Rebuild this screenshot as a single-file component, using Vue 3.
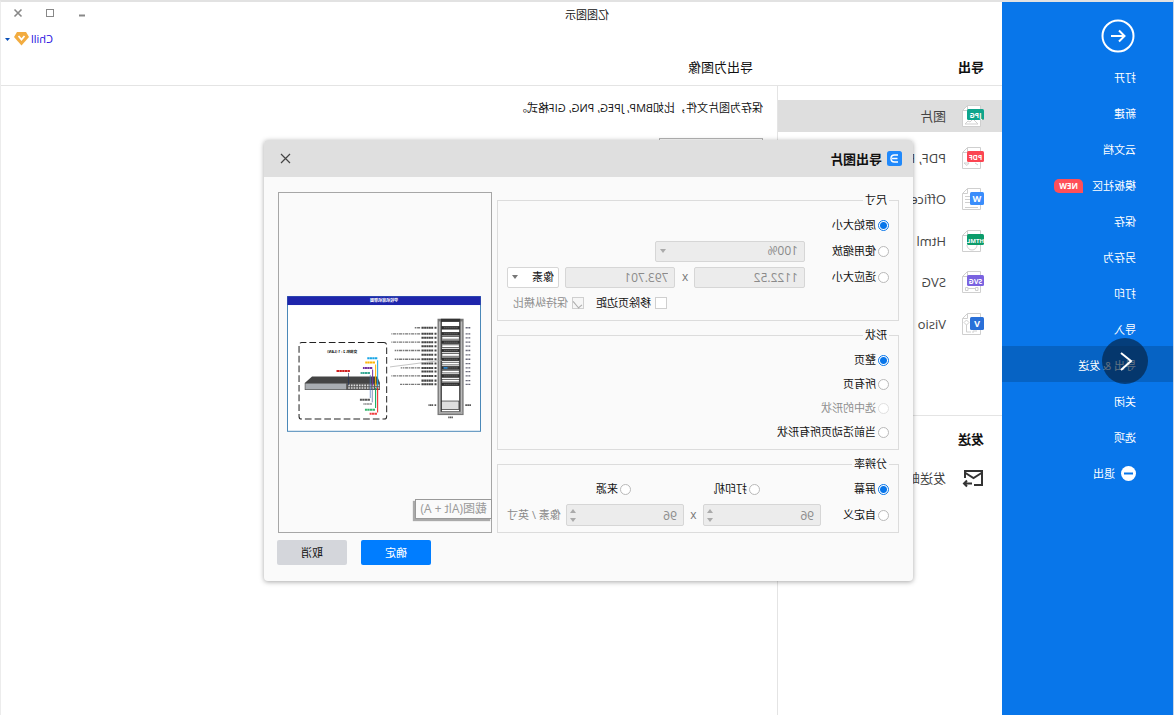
<script setup>
import { ref } from 'vue'

const menu = [
  { label: '打开' },
  { label: '新建' },
  { label: '云文档' },
  { label: '模板社区', badge: 'NEW' },
  { label: '保存' },
  { label: '另存为' },
  { label: '打印' },
  { label: '导入' },
  { label: '导出 & 发送', active: true },
  { label: '关闭' },
  { label: '选项' },
  { label: '退出', exit: true },
]

const formats = [
  { label: '图片', tag: 'JPG', color: '#0ea58c', active: true, art: 'M7 20L12 15L15 18L17 17L20 20Z' },
  { label: 'PDF, PS', tag: 'PDF', color: '#fb4552', art: 'M7 19L10 17M16 17H21L18 19.5Z' },
  { label: 'Office', tag: 'W', color: '#3a8dfb', square: true, art: 'M15 9.5H20M15 12.5H20M15 15.5H20M7 20.5H20' },
  { label: 'Html', tag: 'HTML', color: '#0c9c6b', art: 'M8 16A5 5 0 0 0 18 16' },
  { label: 'SVG', tag: 'SVG', color: '#7a63e0', art: 'M7 17.5H9.5V20.5H7ZM17 17.5H19.5V20.5H17ZM9.5 18.5H17' },
  { label: 'Visio', tag: 'V', color: '#2a70d8', square: true, art: 'M18.5 8L21 10.5L18.5 13L16 10.5ZM18.5 13V20H14M8 19H12V21' },
]

const size = ref('original')
const shape = ref('page')
const resolution = ref('screen')
const scale = ref('100%')
const width = ref('1122.52')
const height = ref('793.701')
const unit = ref('px')
const removeMargin = ref(false)
const keepRatio = ref(true)
const dpiX = ref(96)
const dpiY = ref(96)

const shapes = [
  { value: 'page', label: '整页' },
  { value: 'all', label: '所有页' },
  { value: 'selected', label: '选中的形状', disabled: true },
  { value: 'active', label: '当前活动页所有形状' },
]

// Rack units in the page thumbnail: vertical position and caption length.
const units = [
  { y: 95, w: 62, dark: true },
  { y: 113, w: 132, dark: true },
  { y: 125, w: 36 },
  { y: 138, w: 132, dark: true },
  { y: 150, w: 36 },
  { y: 163, w: 122, dark: true },
  { y: 176, w: 36 },
  { y: 189, w: 122, dark: true },
  { y: 202, w: 36 },
  { y: 215, w: 104, dark: true },
  { y: 226, w: 36 },
  { y: 239, w: 132, dark: true },
  { y: 253, w: 36 },
  { y: 264, w: 106, dark: true },
]
</script>

<template>
  <div class="app">
    <nav class="sidebar">
      <button class="back" aria-label="返回">
        <svg viewBox="0 0 34 34" width="34" height="34" fill="none" stroke="#fff" stroke-width="2">
          <circle cx="17" cy="17" r="15.5" />
          <path d="M24 17H11M16 11.5L10.5 17L16 22.5" />
        </svg>
      </button>
      <a v-for="m in menu" :key="m.label" href="#" class="menu-item" :class="{ active: m.active }">
        <svg v-if="m.exit" viewBox="0 0 15 15" width="15" height="15">
          <circle cx="7.5" cy="7.5" r="7.5" fill="#fff" />
          <rect x="3" y="6.5" width="9" height="2" fill="#0876ea" />
        </svg>
        <span>{{ m.label }}</span>
        <span v-if="m.badge" class="badge">{{ m.badge }}</span>
      </a>
      <button class="prev" aria-label="上一张">
        <svg viewBox="0 0 46 46" width="46" height="46" fill="none" stroke="#fff" stroke-width="2">
          <path d="M27 15L17 23L27 32" />
        </svg>
      </button>
    </nav>

    <header class="titlebar">
      <span class="app-title">亿图图示</span>
      <div class="controls">
        <button aria-label="最小化">
          <svg viewBox="0 0 10 10" width="10" height="10"><path d="M2 7.5H8" stroke="#888" stroke-width="2" /></svg>
        </button>
        <button aria-label="最大化">
          <svg viewBox="0 0 10 10" width="10" height="10"><rect x="1.5" y="1.5" width="7" height="7" fill="none" stroke="#888" /></svg>
        </button>
        <button aria-label="关闭窗口">
          <svg viewBox="0 0 10 10" width="10" height="10"><path d="M1.5 1.5L8.5 8.5M8.5 1.5L1.5 8.5" stroke="#888" stroke-width="1.6" /></svg>
        </button>
      </div>
    </header>

    <div class="heading">
      <h2 class="section-title">导出</h2>
      <h1 class="page-title">导出为图像</h1>
      <a href="#" class="user">
        <span>Chill</span>
        <svg viewBox="0 0 15 14" width="15" height="14">
          <path d="M3 0H12L15 5L7.5 13.5L0 5Z" fill="#f2ac40" />
          <path d="M4.5 4L7.5 7.5L10.5 4" fill="none" stroke="#fff" stroke-width="1.8" />
        </svg>
        <svg class="caret" viewBox="0 0 5 3" width="5" height="3"><path d="M0 0H5L2.5 3Z" fill="#0a4fb8" /></svg>
      </a>
    </div>

    <aside class="panel">
      <ul class="formats">
        <li v-for="f in formats" :key="f.tag">
          <a href="#" class="entry" :class="{ active: f.active }">
            <svg viewBox="0 0 24 24" width="24" height="24">
              <path d="M4.5 1.5H17.5L22.5 6.5V22.5H4.5Z" fill="#fff" stroke="#cfcfcf" />
              <path d="M17.5 1.5V6.5H22.5" fill="none" stroke="#cfcfcf" />
              <path :d="f.art" fill="none" stroke="#cfcfcf" />
              <rect x="1" y="5" :width="f.square ? 14 : 17" :height="f.square ? 13 : 11" rx="1.5" :fill="f.color" />
              <text
                :x="f.square ? 8 : 9.5"
                :y="f.square ? 15 : 13.5"
                :class="f.square ? 'tag-big' : f.tag.length > 3 ? 'tag-small' : 'tag'"
              >{{ f.tag }}</text>
            </svg>
            <span>{{ f.label }}</span>
          </a>
        </li>
      </ul>
      <section class="send">
        <h2 class="section-title">发送</h2>
        <a href="#" class="entry">
          <svg viewBox="0 0 24 24" width="24" height="24" fill="none" stroke="#333" stroke-width="2">
            <path d="M11 19H3V5H20V12" />
            <path d="M3.5 7L11.5 12L19.5 7" />
            <path d="M13 17.5H21M18 14.5L21 17.5L18 20.5" />
          </svg>
          <span>发送邮件</span>
        </a>
      </section>
    </aside>

    <main class="content">
      <p>保存为图片文件，比如BMP, JPEG, PNG, GIF格式。</p>
      <div class="thumb"></div>
    </main>

    <div class="overlay">
      <form class="dialog" role="dialog" aria-labelledby="dialog-title" @submit.prevent>
        <header class="dialog-head">
          <svg viewBox="0 0 15 15" width="15" height="15">
            <rect width="15" height="15" rx="2.5" fill="#2089fb" />
            <path d="M4 4H7.5C12.2 4 12.2 11 7.5 11H4M4.5 7.5H10" fill="none" stroke="#fff" stroke-width="1.4" />
          </svg>
          <h3 id="dialog-title">导出图片</h3>
          <button type="button" class="close" aria-label="关闭对话框">
            <svg viewBox="0 0 11 11" width="11" height="11"><path d="M1 1L10 10M10 1L1 10" stroke="#444" stroke-width="1.2" /></svg>
          </button>
        </header>

        <div class="dialog-body">
          <div class="groups">
            <fieldset>
              <legend>尺寸</legend>
              <div class="row">
                <label><input v-model="size" type="radio" name="size" value="original" />原始大小</label>
              </div>
              <div class="row">
                <label class="lead"><input v-model="size" type="radio" name="size" value="scale" />使用缩放</label>
                <span class="select scale">
                  <select v-model="scale" disabled aria-label="缩放比例"><option>100%</option></select>
                  <i class="arrow-down"></i>
                </span>
              </div>
              <div class="row">
                <label class="lead"><input v-model="size" type="radio" name="size" value="fit" />适应大小</label>
                <input v-model="width" class="box" type="text" disabled aria-label="宽度" />
                <span class="times">x</span>
                <input v-model="height" class="box" type="text" disabled aria-label="高度" />
                <span class="select unit">
                  <select v-model="unit" aria-label="单位"><option value="px">像素</option></select>
                  <i class="arrow-down"></i>
                </span>
              </div>
              <div class="row checks">
                <label><input v-model="removeMargin" type="checkbox" />移除页边距</label>
                <label class="off"><input v-model="keepRatio" type="checkbox" disabled />保持纵横比</label>
              </div>
            </fieldset>

            <fieldset class="tight">
              <legend>形状</legend>
              <div v-for="s in shapes" :key="s.value" class="row">
                <label :class="{ off: s.disabled }">
                  <input v-model="shape" type="radio" name="shape" :value="s.value" :disabled="s.disabled" />{{ s.label }}
                </label>
              </div>
            </fieldset>

            <fieldset>
              <legend>分辨率</legend>
              <div class="row thirds">
                <label><input v-model="resolution" type="radio" name="res" value="screen" />屏幕</label>
                <label><input v-model="resolution" type="radio" name="res" value="printer" />打印机</label>
                <label><input v-model="resolution" type="radio" name="res" value="source" />来源</label>
              </div>
              <div class="row">
                <label class="lead-short"><input v-model="resolution" type="radio" name="res" value="custom" />自定义</label>
                <span class="spin">
                  <input v-model="dpiX" class="box" type="number" disabled aria-label="水平分辨率" />
                  <span class="steps"><i class="arrow-up"></i><i class="arrow-down"></i></span>
                </span>
                <span class="times">x</span>
                <span class="spin">
                  <input v-model="dpiY" class="box" type="number" disabled aria-label="垂直分辨率" />
                  <span class="steps"><i class="arrow-up"></i><i class="arrow-down"></i></span>
                </span>
                <span class="suffix">像素 / 英寸</span>
              </div>
            </fieldset>
          </div>

          <div class="preview">
            <svg class="sheet" viewBox="0 0 580 408">
              <rect x="1.5" y="1.5" width="577" height="403" fill="#fff" stroke="#4a88b8" stroke-width="3" />
              <rect x="1" y="1" width="578" height="26" fill="#1e25ab" />
              <text x="290" y="18" class="sheet-title">学校机房机架图</text>

              <g>
                <rect x="52" y="68" width="78" height="288" fill="#777" />
                <rect x="56" y="76" width="4" height="276" fill="#bbb" />
                <rect x="122" y="76" width="4" height="276" fill="#bbb" />
                <rect x="64" y="76" width="54" height="270" fill="#fff" stroke="#222" stroke-width="2" />
                <rect x="62" y="68" width="58" height="8" fill="#333" />
                <rect x="56" y="346" width="70" height="6" fill="#aaa" />
                <rect x="66" y="314" width="52" height="25" fill="#ddd" stroke="#222" stroke-width="2" />
                <g v-for="u in units" :key="u.y">
                  <rect
                    x="65" :y="u.y - 4" width="52" height="8"
                    :fill="u.dark ? '#333' : '#fff'" stroke="#222" stroke-width="2"
                  />
                  <path v-if="u.dark" :d="`M70 ${u.y}H112`" stroke="#888" stroke-width="2" stroke-dasharray="4 2" />
                  <path :d="`M133 ${u.y}h6M143 ${u.y}h${Math.min(u.w, 36)}`" stroke="#444" stroke-width="6" stroke-dasharray="6 1" />
                  <path v-if="u.w > 40" :d="`M182 ${u.y}h${u.w - 46}`" stroke="#777" stroke-width="4" stroke-dasharray="9 2 5 2" />
                  <path :d="`M32 ${u.y}h15`" stroke="#667" stroke-width="4" stroke-dasharray="4 1" />
                </g>
                <rect x="100" y="213" width="12" height="4" fill="#2196f3" />
                <path d="M134 326h5M143 326h14M30 326h17" stroke="#555" stroke-width="5" stroke-dasharray="5 1" />
                <path d="M84 363h14" stroke="#555" stroke-width="5" stroke-dasharray="4 1" />
                <path d="M116 192L272 212" stroke="#aaa" stroke-width="2" />
              </g>

              <g>
                <rect x="282" y="139" width="262" height="229" rx="8" fill="none" stroke="#222" stroke-width="3" stroke-dasharray="20 9" />
                <text x="415" y="170" class="sheet-sub">交换机 2 : 1 (LAN)</text>
                <path d="M310 241H505L527 260H302Z" fill="#444" />
                <rect x="302" y="260" width="225" height="21" fill="#555" />
                <rect x="403" y="262" width="122" height="17" fill="#a9adb2" />
                <path d="M304 267H400M304 275H400" stroke="#ddd" stroke-width="5" stroke-dasharray="5 3" />
                <path d="M309 192V268" stroke="#18a5e5" stroke-width="3" />
                <path d="M315 205V268" stroke="#fbb400" stroke-width="3" />
                <path d="M324 220V268" stroke="#7030a0" stroke-width="3" />
                <path d="M331 236V305" stroke="#4472c4" stroke-width="2" />
                <path d="M325 275V318" stroke="#4a5f90" stroke-width="2" />
                <path d="M396 230V267" stroke="#23355c" stroke-width="2" />
                <path d="M315 275V335" stroke="#00a550" stroke-width="3" />
                <path d="M309 275V348" stroke="#f02020" stroke-width="3" />
                <g stroke-width="6" stroke-dasharray="7 1">
                  <path d="M310 186h30" stroke="#18a5e5" />
                  <path d="M317 199h29" stroke="#fbb400" />
                  <path d="M325 215h28" stroke="#7030a0" />
                  <path d="M332 230h28" stroke="#36a893" />
                  <path d="M392 224h41" stroke="#d02020" />
                  <path d="M332 310h30" stroke="#555" />
                  <path d="M326 323h26" stroke="#aaa" />
                  <path d="M317 340h30" stroke="#36b56c" />
                  <path d="M311 352h22" stroke="#f04040" />
                </g>
              </g>
            </svg>
            <span class="tooltip" role="tooltip">截图(Alt + A)</span>
          </div>
        </div>

        <footer class="dialog-foot">
          <button type="submit" class="primary">确定</button>
          <button type="button">取消</button>
        </footer>
      </form>
    </div>
  </div>
</template>

<style>
body {
  background: #fff;
}
</style>

<style scoped>
* {
  box-sizing: border-box;
}

/* The whole window is shown flipped left to right. */
.app {
  position: relative;
  display: grid;
  grid-template-columns: 171px 225px 1fr;
  grid-template-rows: 26px 58px 1fr;
  min-height: 100vh;
  border-top: 2px solid #e2e2e2;
  border-left: 1px solid #c9d6e6;
  border-right: 1px solid #ececec;
  overflow: hidden;
  transform: scaleX(-1);
  background: #fff;
  color: #111;
  font-family: "Open Sans", "Noto Sans CJK SC", sans-serif;
  font-size: 11px;
  line-height: 16px;
}

a {
  color: inherit;
  text-decoration: none;
}

button {
  padding: 0;
  border: 0;
  background: none;
  font: inherit;
}

svg {
  display: block;
  flex: none;
}

.sidebar {
  position: relative;
  grid-column: 1;
  grid-row: 1 / -1;
  background: #0876ea;
  color: #fff;
}

.back {
  display: block;
  margin: 17px 0 5px 38px;
}

.menu-item {
  display: flex;
  align-items: center;
  gap: 6px;
  height: 36px;
  padding: 3px 0 0 37px;
}

.menu-item.active {
  background: #0663c4;
}

.badge {
  margin-left: 3px;
  padding: 0 5px;
  border-radius: 5px 5px 5px 0;
  background: #ff4f58;
  font-size: 8px;
  font-weight: 700;
  line-height: 14px;
}

.prev {
  position: absolute;
  top: 336px;
  left: 25px;
  border-radius: 50%;
  background: rgba(4, 32, 60, 0.64);
}

.titlebar {
  grid-column: 1 / -1;
  grid-row: 1;
  display: grid;
  grid-template-columns: 1fr auto 1fr;
  align-items: center;
  z-index: 1;
}

.app-title {
  grid-column: 2;
}

.controls {
  display: flex;
  justify-content: flex-end;
  gap: 22px;
  padding: 0 12px 4px 0;
}

.heading {
  grid-column: 2 / -1;
  grid-row: 2;
  display: grid;
  grid-template-columns: 225px 1fr auto;
  border-bottom: 1px solid #e4e4e4;
}

.section-title,
.page-title {
  margin: 0;
  font-size: 13px;
  line-height: 20px;
}

.heading .section-title {
  padding: 29px 0 0 18px;
}

.page-title {
  padding: 29px 0 0 24px;
  font-weight: 400;
}

.user {
  display: flex;
  align-items: center;
  align-self: start;
  gap: 2px;
  padding: 3px 4px 0 0;
  color: #1c0ce0;
}

.caret {
  margin-left: 2px;
}

.panel {
  grid-column: 2;
  grid-row: 3;
  border-right: 1px solid #e4e4e4;
}

.formats {
  display: flex;
  flex-direction: column;
  justify-content: space-between;
  height: 240px;
  margin: 14px 0 0;
  padding: 0;
  list-style: none;
}

.entry {
  display: flex;
  align-items: center;
  gap: 15px;
  height: 32px;
  padding-left: 17px;
  color: #444;
  font-size: 13px;
  white-space: nowrap;
}

.entry.active {
  background: #dedede;
}

.tag,
.tag-small,
.tag-big {
  fill: #fff;
  font-size: 7px;
  font-weight: 700;
  text-anchor: middle;
}

.tag-small {
  font-size: 6px;
}

.tag-big {
  font-size: 9px;
}

.send {
  margin-top: 75px;
  border-top: 1px solid #e4e4e4;
}

.send .section-title {
  padding: 13px 0 13px 18px;
}

.content {
  grid-column: 3;
  grid-row: 3;
  padding: 14px 14px 0;
}

.content p {
  margin: 0;
}

.thumb {
  width: 104px;
  height: 80px;
  margin-top: 22px;
  border: 1px solid #b4b4b4;
}

.overlay {
  position: absolute;
  inset: 0;
  display: flex;
  justify-content: center;
  align-items: flex-start;
  padding: 138px 3px 0 0;
  z-index: 2;
}

.dialog {
  width: 649px;
  max-width: 100%;
  border-radius: 4px;
  background: #fafafa;
  box-shadow: 0 1px 5px rgba(0, 0, 0, 0.35);
}

.dialog-head {
  display: flex;
  align-items: center;
  gap: 5px;
  height: 37px;
  padding: 0 16px 0 11px;
  border-radius: 4px 4px 0 0;
  background: #dfdfdf;
}

.dialog-head h3 {
  margin: 0;
  font-size: 13px;
}

.close {
  margin-left: auto;
}

.dialog-body {
  display: grid;
  grid-template-columns: 1fr 214px;
  gap: 5px;
  padding: 15px 14px 0;
}

.groups {
  display: flex;
  flex-direction: column;
  gap: 6px;
}

fieldset {
  display: flex;
  flex-direction: column;
  gap: 4px;
  min-width: 0;
  margin: 0;
  padding: 6px 9px;
  border: 1px solid #dcdcdc;
}

fieldset.tight {
  gap: 2px;
}

legend {
  padding: 0 2px;
}

.row {
  display: flex;
  align-items: center;
  height: 22px;
}

label {
  display: flex;
  align-items: center;
  gap: 2px;
  white-space: nowrap;
}

.lead {
  width: 84px;
}

.lead-short {
  width: 68px;
}

.off {
  color: #8f8f8f;
}

input[type="radio"] {
  appearance: none;
  width: 11px;
  height: 11px;
  margin: 0;
  border: 1px solid #b9b9b9;
  border-radius: 50%;
  background: #fff;
}

input[type="radio"]:checked {
  border-color: #0876ea;
  background: radial-gradient(circle, #0876ea 3px, #fff 4px);
}

input[type="radio"]:disabled {
  border-color: #e0e0e0;
}

.checks {
  justify-content: flex-end;
  gap: 12px;
  padding-right: 6px;
}

.checks label {
  gap: 4px;
}

input[type="checkbox"] {
  appearance: none;
  width: 12px;
  height: 12px;
  margin: 0;
  border: 1px solid #cfcfcf;
  background: #fff;
}

input[type="checkbox"]:checked {
  display: grid;
  place-items: center;
  background: #f6f6f6;
}

input[type="checkbox"]:checked::after {
  content: "";
  width: 4px;
  height: 8px;
  border: solid #aaa;
  border-width: 0 1px 1px 0;
  transform: rotate(40deg);
}

.box,
select {
  appearance: none;
  flex: 1;
  width: 100%;
  min-width: 0;
  height: 21px;
  margin: 0;
  padding: 0 6px;
  border: 1px solid #d6d6d6;
  border-radius: 2px;
  background: #fff;
  color: #111;
  font: inherit;
}

.box:disabled,
select:disabled {
  background: #ececec;
  color: #8a8a8a;
  font-size: 12px;
  opacity: 1;
}

input[type="number"] {
  appearance: textfield;
}

.select,
.spin {
  display: grid;
  align-items: center;
}

.select > *,
.spin > * {
  grid-area: 1 / 1;
}

.scale {
  width: 150px;
}

.unit {
  width: 52px;
  margin-left: 6px;
}

.unit select {
  padding: 0 4px;
}

.spin {
  flex: 1;
}

.spin .box {
  height: 22px;
}

.arrow-down,
.arrow-up {
  border: 3px solid transparent;
}

.arrow-down {
  border-top: 4px solid #aaa;
  border-bottom: 0;
}

.arrow-up {
  border-bottom: 4px solid #aaa;
  border-top: 0;
}

.select .arrow-down {
  justify-self: end;
  margin-right: 5px;
  pointer-events: none;
}

.unit .arrow-down {
  border-top-color: #777;
}

.steps {
  justify-self: end;
  display: grid;
  gap: 5px;
  margin-right: 4px;
}

.times {
  width: 19px;
  color: #777;
  font-size: 12px;
  text-align: center;
}

.thirds {
  display: grid;
  grid-template-columns: 129px 129px 1fr;
}

.suffix {
  margin-left: 5px;
  color: #8a8a8a;
  white-space: nowrap;
}

.preview {
  position: relative;
  padding: 103px 8px 0 10px;
  border: 1px solid #a6a6a6;
}

.sheet {
  width: 100%;
  height: auto;
}

.sheet-title {
  fill: #fff;
  font-size: 12px;
  font-weight: 700;
  text-anchor: middle;
}

.sheet-sub {
  fill: #111;
  font-size: 11px;
  font-weight: 700;
  text-anchor: middle;
}

.tooltip {
  position: absolute;
  bottom: 13px;
  left: -1px;
  padding: 1px 4px;
  border: 1px solid #999;
  background: #fafafa;
  box-shadow: 2px 2px 1px #aaa;
  color: #999;
  font-size: 12px;
  white-space: nowrap;
}

.dialog-foot {
  display: flex;
  justify-content: flex-end;
  gap: 14px;
  padding: 7px 13px 16px;
}

.dialog-foot button {
  width: 70px;
  height: 25px;
  border-radius: 2px;
  background: #d4d6db;
  color: #111;
}

.dialog-foot .primary {
  background: #007dff;
  color: #fff;
}
</style>
